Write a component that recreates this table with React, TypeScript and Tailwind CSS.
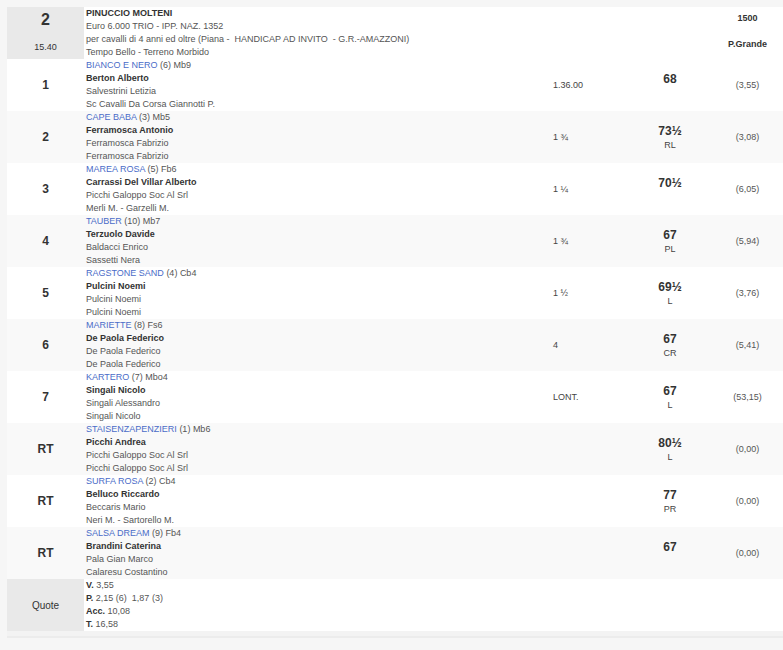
import React from "react";

type Row = {
  pos: string;
  horse: string;
  extra: string;
  jockey: string;
  trainer: string;
  owner: string;
  dist: string;
  rating: string;
  sub: string;
  odds: string;
};

const rows: Row[] = [
  { pos: "1", horse: "BIANCO E NERO", extra: "(6) Mb9", jockey: "Berton Alberto", trainer: "Salvestrini Letizia", owner: "Sc Cavalli Da Corsa Giannotti P.", dist: "1.36.00", rating: "68", sub: "", odds: "(3,55)" },
  { pos: "2", horse: "CAPE BABA", extra: "(3) Mb5", jockey: "Ferramosca Antonio", trainer: "Ferramosca Fabrizio", owner: "Ferramosca Fabrizio", dist: "1 ¾", rating: "73½", sub: "RL", odds: "(3,08)" },
  { pos: "3", horse: "MAREA ROSA", extra: "(5) Fb6", jockey: "Carrassi Del Villar Alberto", trainer: "Picchi Galoppo Soc Al Srl", owner: "Merli M. - Garzelli M.", dist: "1 ¼", rating: "70½", sub: "", odds: "(6,05)" },
  { pos: "4", horse: "TAUBER", extra: "(10) Mb7", jockey: "Terzuolo Davide", trainer: "Baldacci Enrico", owner: "Sassetti Nera", dist: "1 ¾", rating: "67", sub: "PL", odds: "(5,94)" },
  { pos: "5", horse: "RAGSTONE SAND", extra: "(4) Cb4", jockey: "Pulcini Noemi", trainer: "Pulcini Noemi", owner: "Pulcini Noemi", dist: "1 ½", rating: "69½", sub: "L", odds: "(3,76)" },
  { pos: "6", horse: "MARIETTE", extra: "(8) Fs6", jockey: "De Paola Federico", trainer: "De Paola Federico", owner: "De Paola Federico", dist: "4", rating: "67", sub: "CR", odds: "(5,41)" },
  { pos: "7", horse: "KARTERO", extra: "(7) Mbo4", jockey: "Singali Nicolo", trainer: "Singali Alessandro", owner: "Singali Nicolo", dist: "LONT.", rating: "67", sub: "L", odds: "(53,15)" },
  { pos: "RT", horse: "STAISENZAPENZIERI", extra: "(1) Mb6", jockey: "Picchi Andrea", trainer: "Picchi Galoppo Soc Al Srl", owner: "Picchi Galoppo Soc Al Srl", dist: "", rating: "80½", sub: "L", odds: "(0,00)" },
  { pos: "RT", horse: "SURFA ROSA", extra: "(2) Cb4", jockey: "Belluco Riccardo", trainer: "Beccaris Mario", owner: "Neri M. - Sartorello M.", dist: "", rating: "77", sub: "PR", odds: "(0,00)" },
  { pos: "RT", horse: "SALSA DREAM", extra: "(9) Fb4", jockey: "Brandini Caterina", trainer: "Pala Gian Marco", owner: "Calaresu Costantino", dist: "", rating: "67", sub: "", odds: "(0,00)" },
];

const grid = "grid grid-cols-[77px_467px_77px_84px_71px] h-[52px]";

export default function App() {
  return (
    <div
      className="min-h-[650px] bg-[#f6f6f6] pt-[7px] pl-[7px] text-[9px] leading-[13px] text-[#555]"
      style={{ fontFamily: '"Liberation Sans", Arial, sans-serif' }}
    >
      <div className="w-[776px] border-b-[5px] border-[#f3f3f3]">
        {/* header row */}
        <div className={grid + " bg-white"}>
          <div className="flex flex-col items-center bg-[#e9e9e9] text-[#333]">
            <div className="mt-[4px] text-[16px] font-bold leading-[18px]">2</div>
            <div className="mt-[12px] text-[9px] leading-[13px]">15.40</div>
          </div>
          <div className="pl-[2px]">
            <div className="font-bold text-[#333]">PINUCCIO MOLTENI</div>
            <div>Euro 6.000 TRIO - IPP. NAZ. 1352</div>
            <div className="whitespace-pre">per cavalli di 4 anni ed oltre (Piana -  HANDICAP AD INVITO  - G.R.-AMAZZONI)</div>
            <div>Tempo Bello - Terreno Morbido</div>
          </div>
          <div />
          <div />
          <div className="flex flex-col items-center pt-[5px] font-bold text-[#333]">
            <div>1500</div>
            <div className="mt-[13px]">P.Grande</div>
          </div>
        </div>
        {rows.map((r, i) => (
          <div key={i} className={grid + (i % 2 === 1 ? " bg-[#f9f9f9]" : " bg-white")}>
            <div className="flex items-center justify-center text-[12px] font-bold text-[#333]">{r.pos}</div>
            <div className="pl-[2px]">
              <div>
                <span className="text-[#4a6cc8]">{r.horse}</span> {r.extra}
              </div>
              <div className="font-bold text-[#333]">{r.jockey}</div>
              <div>{r.trainer}</div>
              <div>{r.owner}</div>
            </div>
            <div className="flex items-center pl-[2px] text-[#444]">{r.dist}</div>
            <div className="flex flex-col items-center justify-center">
              <div className="text-[12px] font-bold leading-[16px] text-[#333]">{r.rating}</div>
              <div className="h-[13px] text-[#444]">{r.sub}</div>
            </div>
            <div className="flex items-center justify-center text-[#555]">{r.odds}</div>
          </div>
        ))}
        {/* quote row */}
        <div className={grid + " bg-white"}>
          <div className="flex items-center justify-center bg-[#e9e9e9] text-[10px] text-[#333]">Quote</div>
          <div className="pl-[2px]">
            <div><span className="font-bold text-[#333]">V.</span> 3,55</div>
            <div className="whitespace-pre"><span className="font-bold text-[#333]">P.</span> 2,15 (6)  1,87 (3)</div>
            <div><span className="font-bold text-[#333]">Acc.</span> 10,08</div>
            <div><span className="font-bold text-[#333]">T.</span> 16,58</div>
          </div>
          <div />
          <div />
          <div />
        </div>
      </div>
      <div className="h-[2px] w-[776px] bg-[#ececec]" />
    </div>
  );
}
